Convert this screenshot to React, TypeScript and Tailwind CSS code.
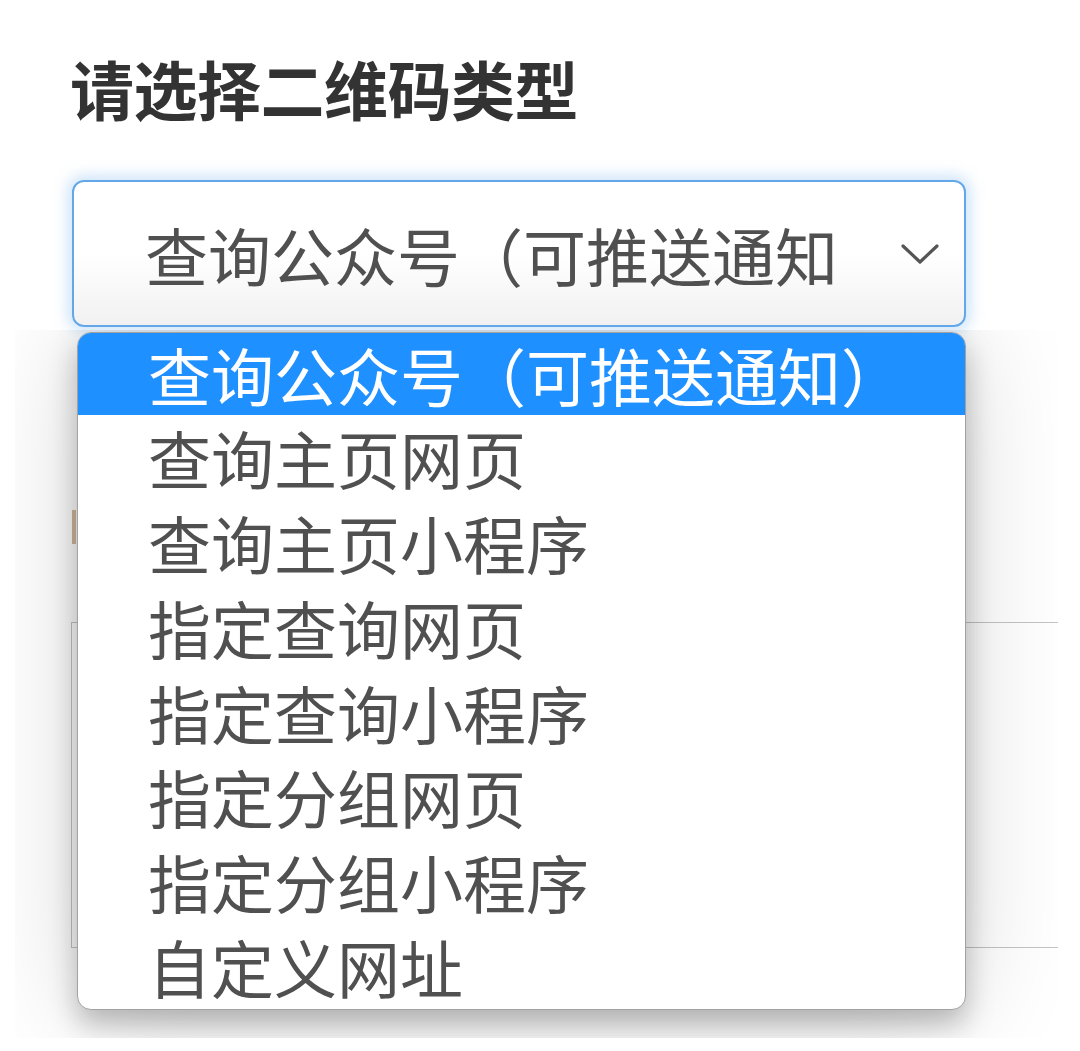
import React from 'react';

const options = [
    '查询公众号（可推送通知）',
    '查询主页网页',
    '查询主页小程序',
    '指定查询网页',
    '指定查询小程序',
    '指定分组网页',
    '指定分组小程序',
    '自定义网址',
];

const cjk = { fontFamily: '"Noto Sans CJK SC", "Noto Sans", sans-serif' };

export default function App() {
    return (
        <div className="min-h-[1051px] w-[1080px] bg-white" style={cjk}>
            <div className="pl-[70px] pt-[49px]">
                <h2 className="text-[64px] leading-[76px] font-bold text-[#333333] tracking-[-0.5px]">请选择二维码类型</h2>
            </div>

            {/* Select (focused) */}
            <div className="ml-[72px] mt-[55px] w-[894px] h-[147px] rounded-[12px] border-2 border-[#62a8e8] bg-gradient-to-b from-white via-white to-[#f1f1f1] shadow-[0_0_14px_5px_rgba(120,180,240,0.35)] flex items-center pl-[71px] pr-[22px]">
                <div className="w-[693px] overflow-hidden whitespace-nowrap text-[63px] leading-[80px] text-[#505050]">
                    查询公众号（可推送通知）
                </div>
                <div className="flex-1" />
                <svg width="40" height="24" viewBox="0 0 40 24" className="mr-[2px]">
                    <polyline points="3,4 20,20 37,4" fill="none" stroke="#555" strokeWidth="3.2" strokeLinecap="round" strokeLinejoin="round" />
                </svg>
            </div>

            {/* Options list over page content */}
            <div className="relative ml-[15px] mt-[3px] w-[1043px] h-[708px] overflow-hidden">
                {/* page content behind */}
                <div className="ml-[56px] mt-[292px] w-[1100px] h-[326px] border border-[#c4c4c4] bg-white" />
                <div className="absolute left-[57px] top-[180px] w-[4px] h-[34px] bg-[#b88a5c] opacity-60" />

                <div className="absolute left-[62px] top-[2px] w-[889px] h-[678px] rounded-[14px] border border-[#a2a2a2] bg-white overflow-hidden shadow-[0_14px_28px_rgba(0,0,0,0.25),0_0_110px_rgba(0,0,0,0.16)]">
                    {options.map((o, i) => (
                        <div
                            key={o}
                            className={
                                i === 0
                                    ? 'h-[82px] pl-[70px] flex items-center text-[63px] whitespace-nowrap bg-[#1e90ff] text-white'
                                    : 'h-[84.8px] pl-[70px] flex items-center text-[63px] whitespace-nowrap text-[#505050]'
                            }
                        >
                            {o}
                        </div>
                    ))}
                </div>
            </div>
        </div>
    );
}
